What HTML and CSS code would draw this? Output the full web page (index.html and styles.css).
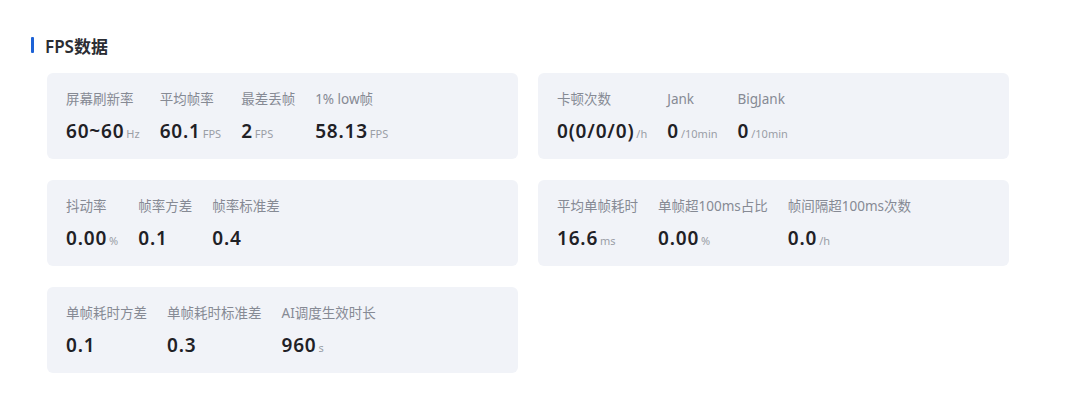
FILE: index.html
```html
<!DOCTYPE html>
<html lang="zh-CN">
<head>
    <meta charset="UTF-8">
    <title>FPS数据</title>
    <link rel="stylesheet" href="styles.css">
</head>
<body>
    <div class="section">
        <div class="section-title">FPS数据</div>

        <div class="cards">
            <div class="card">
                <div class="metric">
                    <div class="label">屏幕刷新率</div>
                    <div class="value">60~60<span class="unit">Hz</span></div>
                </div>
                <div class="metric">
                    <div class="label">平均帧率</div>
                    <div class="value">60.1<span class="unit">FPS</span></div>
                </div>
                <div class="metric">
                    <div class="label">最差丢帧</div>
                    <div class="value">2<span class="unit">FPS</span></div>
                </div>
                <div class="metric">
                    <div class="label">1% low帧</div>
                    <div class="value">58.13<span class="unit">FPS</span></div>
                </div>
            </div>

            <div class="card">
                <div class="metric">
                    <div class="label">卡顿次数</div>
                    <div class="value">0(0/0/0)<span class="unit">/h</span></div>
                </div>
                <div class="metric">
                    <div class="label">Jank</div>
                    <div class="value">0<span class="unit">/10min</span></div>
                </div>
                <div class="metric">
                    <div class="label">BigJank</div>
                    <div class="value">0<span class="unit">/10min</span></div>
                </div>
            </div>

            <div class="card">
                <div class="metric">
                    <div class="label">抖动率</div>
                    <div class="value">0.00<span class="unit">%</span></div>
                </div>
                <div class="metric">
                    <div class="label">帧率方差</div>
                    <div class="value">0.1</div>
                </div>
                <div class="metric">
                    <div class="label">帧率标准差</div>
                    <div class="value">0.4</div>
                </div>
            </div>

            <div class="card">
                <div class="metric">
                    <div class="label">平均单帧耗时</div>
                    <div class="value">16.6<span class="unit">ms</span></div>
                </div>
                <div class="metric">
                    <div class="label">单帧超100ms占比</div>
                    <div class="value">0.00<span class="unit">%</span></div>
                </div>
                <div class="metric">
                    <div class="label">帧间隔超100ms次数</div>
                    <div class="value">0.0<span class="unit">/h</span></div>
                </div>
            </div>

            <div class="card">
                <div class="metric">
                    <div class="label">单帧耗时方差</div>
                    <div class="value">0.1</div>
                </div>
                <div class="metric">
                    <div class="label">单帧耗时标准差</div>
                    <div class="value">0.3</div>
                </div>
                <div class="metric">
                    <div class="label">AI调度生效时长</div>
                    <div class="value">960<span class="unit">s</span></div>
                </div>
            </div>
        </div>
    </div>
</body>
</html>
```

FILE: styles.css
```css
body {
    margin: 0;
    background: #ffffff;
    font-family: "Noto Sans", "Noto Sans CJK SC", sans-serif;
    color: #1f2126;
}

.section {
    padding: 36px 0 0 31px;
}

.section-title {
    display: flex;
    align-items: center;
    height: 18px;
    font-size: 17px;
    font-weight: 600;
    color: #2b2d33;
}

.section-title::before {
    content: "";
    width: 3px;
    height: 16px;
    margin-right: 11px;
    background: #1d62d6;
    border-radius: 1px;
}

.cards {
    display: grid;
    grid-template-columns: 471px 471px;
    column-gap: 20px;
    row-gap: 21px;
    margin: 19px 0 0 16px;
}

.card {
    display: flex;
    gap: 20px;
    height: 86px;
    box-sizing: border-box;
    padding: 17px 19px 0;
    background: #f1f3f8;
    border-radius: 6px;
}

.label {
    font-size: 13.5px;
    line-height: 18px;
    color: #868a94;
    white-space: nowrap;
}

.value {
    margin-top: 10px;
    font-size: 19px;
    line-height: 26px;
    font-weight: 600;
    letter-spacing: 0.8px;
    white-space: nowrap;
}

.unit {
    margin-left: 2px;
    font-size: 11px;
    font-weight: 400;
    letter-spacing: 0;
    color: #9a9ea6;
}
```
